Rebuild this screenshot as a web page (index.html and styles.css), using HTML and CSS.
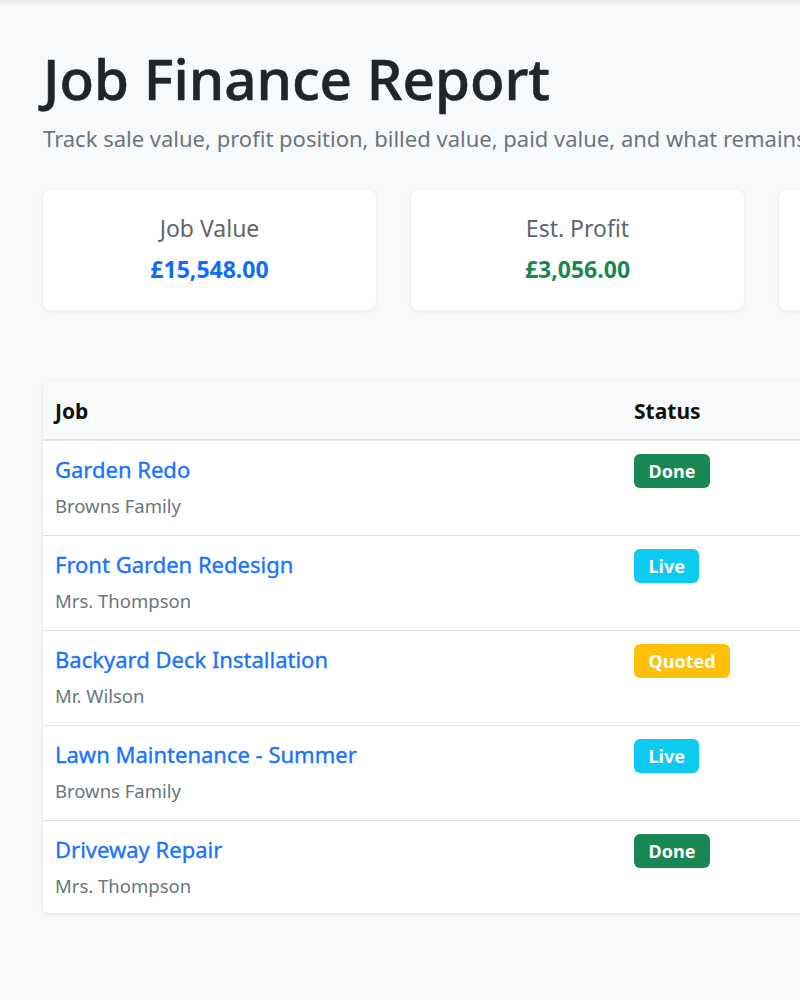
FILE: index.html
```html
<!DOCTYPE html>
<html lang="en">
<head>
    <meta charset="UTF-8">
    <meta name="viewport" content="width=device-width, initial-scale=1.0">
    <title>Job Finance Report</title>
    <link rel="stylesheet" href="styles.css">
</head>
<body>

    <main class="page">
        <h1 class="page-title">Job Finance Report</h1>
        <p class="page-lead">Track sale value, profit position, billed value, paid value, and what remains</p>

        <section class="summary">
            <div class="stat-card">
                <div class="stat-label">Job Value</div>
                <div class="stat-value blue">£15,548.00</div>
            </div>
            <div class="stat-card">
                <div class="stat-label">Est. Profit</div>
                <div class="stat-value green">£3,056.00</div>
            </div>
            <div class="stat-card stat-card-off"></div>
        </section>

        <div class="jobs-card">
            <table class="jobs">
                <thead>
                    <tr>
                        <th class="col-job">Job</th>
                        <th class="col-status">Status</th>
                    </tr>
                </thead>
                <tbody>
                    <tr>
                        <td>
                            <a class="job-link" href="#">Garden Redo</a>
                            <div class="job-client">Browns Family</div>
                        </td>
                        <td><span class="badge done">Done</span></td>
                    </tr>
                    <tr>
                        <td>
                            <a class="job-link" href="#">Front Garden Redesign</a>
                            <div class="job-client">Mrs. Thompson</div>
                        </td>
                        <td><span class="badge live">Live</span></td>
                    </tr>
                    <tr>
                        <td>
                            <a class="job-link" href="#">Backyard Deck Installation</a>
                            <div class="job-client">Mr. Wilson</div>
                        </td>
                        <td><span class="badge quoted">Quoted</span></td>
                    </tr>
                    <tr>
                        <td>
                            <a class="job-link" href="#">Lawn Maintenance - Summer</a>
                            <div class="job-client">Browns Family</div>
                        </td>
                        <td><span class="badge live">Live</span></td>
                    </tr>
                    <tr>
                        <td>
                            <a class="job-link" href="#">Driveway Repair</a>
                            <div class="job-client">Mrs. Thompson</div>
                        </td>
                        <td><span class="badge done">Done</span></td>
                    </tr>
                </tbody>
            </table>
        </div>
    </main>

</body>
</html>
```

FILE: styles.css
```css
html, body {
    overflow-x: hidden;
}
body {
    margin: 0;
    padding: 0;
    font-family: "Noto Sans", "Open Sans", Arial, sans-serif;
    color: #212529;
    background: linear-gradient(to bottom, rgba(0, 0, 0, 0.07), rgba(0, 0, 0, 0) 7px) no-repeat, #f8f9fa;
}
.page {
    width: 1114px;
    padding: 44px 0 60px 43px;
}
.page-title {
    margin: 0;
    font-size: 56.5px;
    line-height: 70px;
    font-weight: 500;
    color: #212529;
    -webkit-text-stroke: 0.6px #212529;
}
.page-lead {
    margin: 8px 0 0;
    font-size: 22px;
    line-height: 32px;
    color: #6c757d;
    white-space: nowrap;
}
.summary {
    display: grid;
    grid-template-columns: 333px 333px 333px;
    gap: 35px;
    margin-top: 36px;
}
.stat-card {
    background-color: #fff;
    border-radius: 8px;
    box-shadow: 0 1px 4px rgba(0, 0, 0, 0.08);
    padding: 22px 16px 25px;
    text-align: center;
}
.stat-card-off {
    min-height: 120px;
    box-sizing: border-box;
}
.stat-label {
    font-size: 23px;
    line-height: 32px;
    color: #5f666d;
}
.stat-value {
    margin-top: 9px;
    font-size: 23px;
    line-height: 32px;
    font-weight: 700;
}
.blue {
    color: #0d6efd;
}
.green {
    color: #198754;
}
.jobs-card {
    margin-top: 71px;
    width: 1071px;
    background-color: #fff;
    border-radius: 5px;
    box-shadow: 0 1px 4px rgba(0, 0, 0, 0.1);
    overflow: hidden;
}
.jobs {
    width: 100%;
    border-collapse: collapse;
    table-layout: fixed;
}
.jobs th {
    background-color: #f8f9fa;
    text-align: left;
    font-size: 21px;
    line-height: 30px;
    font-weight: 700;
    color: #111;
    padding: 15px 12px 13px;
    border-bottom: 2px solid #e2e5e9;
}
.col-job {
    width: 555px;
}
.jobs td {
    vertical-align: top;
    padding: 13px 12px 16px;
    border-bottom: 1px solid #dee2e6;
}
.jobs tbody tr:last-child td {
    border-bottom: none;
    padding-bottom: 14px;
}
.job-link {
    display: block;
    font-size: 22px;
    line-height: 30px;
    color: #1a73fd;
    text-decoration: none;
    -webkit-text-stroke: 0.35px #1a73fd;
}
.job-client {
    margin-top: 9px;
    font-size: 18.5px;
    line-height: 26px;
    color: #6c757d;
}
.badge {
    display: inline-block;
    font-size: 18px;
    line-height: 18px;
    font-weight: 700;
    color: #fff;
    padding: 8px 14.5px;
    border-radius: 6px;
}
.done {
    background-color: #198754;
}
.live {
    background-color: #0dcaf0;
}
.quoted {
    background-color: #ffc107;
}
```
